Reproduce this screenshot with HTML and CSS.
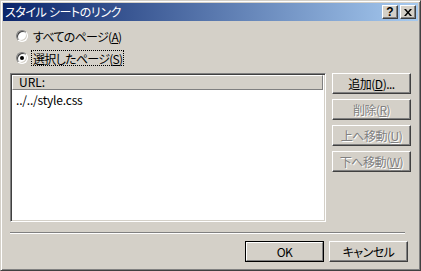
FILE: index.html
```html
<!DOCTYPE html>
<html lang="ja">
<head>
<meta charset="utf-8">
<title>スタイル シートのリンク</title>
<link rel="stylesheet" href="styles.css">
</head>
<body>
<div class="window">
  <div class="titlebar">
    <span class="title">スタイル シートのリンク</span>
    <div class="caption-buttons">
      <span class="cap-btn help">?</span>
      <span class="cap-btn close"><svg width="8" height="7" viewBox="0 0 8 7"><path d="M0 0h2l2 2.5L6 0h2L5 3.5 8 7H6L4 4.5 2 7H0l3-3.5z" fill="#000"/></svg></span>
    </div>
  </div>
  <div class="content">
    <div class="radios">
      <div class="radio"><span class="radio-circle"></span><span class="radio-label">すべてのページ(<u>A</u>)</span></div>
      <div class="radio"><span class="radio-circle"><span class="dot"></span></span><span class="radio-label focus">選択したページ(<u>S</u>)</span></div>
    </div>
    <div class="main">
      <div class="listbox">
        <div class="list-header">URL:</div>
        <div class="list-item">../../style.css</div>
      </div>
      <div class="side-buttons">
        <div class="btn">追加(<u>D</u>)...</div>
        <div class="btn disabled">削除(<u>R</u>)</div>
        <div class="btn disabled">上へ移動(<u>U</u>)</div>
        <div class="btn disabled">下へ移動(<u>W</u>)</div>
      </div>
    </div>
    <div class="separator"></div>
    <div class="footer">
      <div class="btn default"><span class="inner">OK</span></div>
      <div class="btn">キャンセル</div>
    </div>
  </div>
</div>
</body>
</html>
```
FILE: styles.css
```css
* { box-sizing: border-box; }
html, body { margin: 0; padding: 0; background: #d4d0c8; }
body {
  font-family: "Noto Sans CJK JP", "Liberation Sans", sans-serif;
  font-size: 12px;
  line-height: 14px;
  font-feature-settings: "palt";
  letter-spacing: -0.5px;
  color: #000;
}
.window {
  width: 421px;
  height: 271px;
  background: #d4d0c8;
  border: 1px solid;
  border-color: #d4d0c8 #404040 #404040 #d4d0c8;
  box-shadow: inset 1px 1px 0 #fff, inset -1px -1px 0 #808080;
  padding: 2px;
  display: flex;
  flex-direction: column;
}
.titlebar {
  height: 18px;
  flex: none;
  background: linear-gradient(to right, #0a246a, #a6caf0);
  display: flex;
  align-items: center;
  justify-content: space-between;
  padding: 0 2px 0 2px;
}
.title {
  color: #fff;
  font-size: 12px;
  line-height: 14px;
  letter-spacing: -0.4px;
}
.caption-buttons {
  display: flex;
  gap: 2px;
}
.cap-btn {
  width: 16px;
  height: 14px;
  background: #d4d0c8;
  border: 1px solid;
  border-color: #fff #404040 #404040 #fff;
  box-shadow: inset -1px -1px 0 #808080;
  display: flex;
  align-items: center;
  justify-content: center;
  font-family: "Liberation Sans", sans-serif;
  font-weight: bold;
  font-size: 12px;
  line-height: 11px;
  letter-spacing: 0;
}
.content {
  flex: 1;
  padding: 7px 7px 0 7px;
  display: flex;
  flex-direction: column;
}
.radios {
  display: flex;
  flex-direction: column;
  gap: 6px;
  padding-left: 6px;
}
.radio {
  height: 16px;
  display: flex;
  align-items: center;
  gap: 3px;
}
.radio-circle {
  width: 12px;
  height: 12px;
  border-radius: 50%;
  background: #fff;
  border: 1px solid;
  border-color: #808080 #fff #fff #808080;
  box-shadow: inset 1px 1px 0 #404040, inset -1px -1px 0 #d4d0c8;
  display: flex;
  align-items: center;
  justify-content: center;
}
.dot {
  width: 4px;
  height: 4px;
  border-radius: 50%;
  background: #000;
}
.radio-label {
  height: 16px;
  padding: 1px 1px 0 1px;
  border: 1px solid transparent;
  line-height: 13px;
  letter-spacing: -0.7px;
}
.radio-label.focus {
  border: 1px dotted #000;
}
.main {
  margin-top: 7px;
  display: flex;
  gap: 6px;
}
.listbox {
  width: 316px;
  height: 149px;
  background: #fff;
  border: 1px solid;
  border-color: #808080 #fff #fff #808080;
  box-shadow: inset 1px 1px 0 #404040, inset -1px -1px 0 #d4d0c8;
  padding: 1px;
  display: flex;
  flex-direction: column;
}
.list-header {
  height: 15px;
  margin-right: 1px;
  background: #d4d0c8;
  border: 1px solid;
  border-color: #fff #808080 #808080 #fff;
  padding-left: 6px;
  line-height: 12px;
  letter-spacing: 0;
}
.list-item {
  padding: 3px 0 0 4px;
  line-height: 14px;
  letter-spacing: -0.2px;
}
.side-buttons {
  width: 79px;
  display: flex;
  flex-direction: column;
  gap: 5px;
}
.btn {
  width: 79px;
  height: 21px;
  background: #d4d0c8;
  border: 1px solid;
  border-color: #fff #404040 #404040 #fff;
  box-shadow: inset -1px -1px 0 #808080;
  display: flex;
  align-items: center;
  justify-content: center;
  line-height: 14px;
}
.btn.disabled {
  color: #808080;
  text-shadow: 1px 1px 0 #fff;
}
.btn.default {
  border: 1px solid #000;
  box-shadow: none;
  padding: 0;
}
.btn.default .inner {
  width: 100%;
  height: 100%;
  border: 1px solid;
  border-color: #fff #808080 #808080 #fff;
  display: flex;
  align-items: center;
  justify-content: center;
}
.separator {
  margin-top: 10px;
  width: 395px;
  height: 2px;
  border-top: 1px solid #808080;
  border-bottom: 1px solid #fff;
}
.footer {
  margin-top: 7px;
  display: flex;
  justify-content: flex-end;
  gap: 5px;
  padding-right: 3px;
}
u { text-decoration: underline; text-underline-offset: 1px; }
```
